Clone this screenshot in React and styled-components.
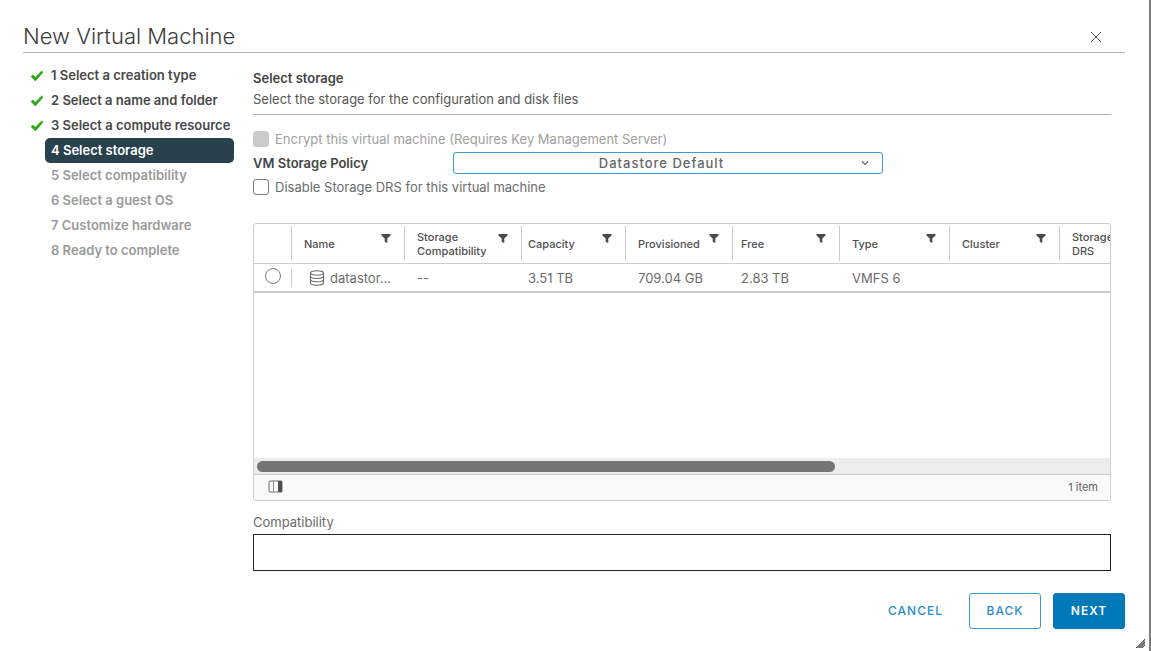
import React, { useState } from "react";
import styled, { createGlobalStyle, css } from "styled-components";

const GlobalStyle = createGlobalStyle`
  *, *::before, *::after { box-sizing: border-box; }
  body {
    margin: 0;
    background: #fff;
    color: #565656;
    font-family: Inter, "Liberation Sans", sans-serif;
    font-size: 13px;
    line-height: 20px;
  }
  button, input, select, textarea { font: inherit; color: inherit; margin: 0; }
`;

const Dialog = styled.main`
  position: relative;
  display: flex;
  flex-direction: column;
  min-height: 100vh;
  padding: 20px 24px 22px 23px;
  border-right: 2px solid #7d7d7d;
`;

const Header = styled.header`
  display: flex;
  align-items: center;
  justify-content: space-between;
  height: 33px;
  padding-right: 22px;
  border-bottom: 1px solid #b3b3b3;
`;

const Title = styled.h1`
  margin: 0;
  font-size: 22px;
  font-weight: 300;
  line-height: 32px;
  color: #3c3c3c;
`;

const CloseButton = styled.button`
  display: flex;
  padding: 4px 2px 2px;
  border: 0;
  background: none;
  cursor: pointer;
`;

const Columns = styled.div`
  display: flex;
  gap: 19px;
  padding-right: 14px;
`;

const Steps = styled.ol`
  flex: 0 0 211px;
  margin: 10px 0 0;
  padding: 0 0 0 7px;
  list-style: none;
`;

const Step = styled.li`
  display: flex;
  align-items: center;
  height: 25px;
  white-space: nowrap;
`;

const StepMark = styled.span`
  display: flex;
  flex: 0 0 15px;
`;

const StepLabel = styled.span`
  flex: 1;
  padding-left: 6px;
  border-radius: 5px;
  line-height: 25px;
  font-size: 13px;
  font-weight: 600;
  color: ${(p) => (p.$state === "todo" ? "#9a9a9a" : "#484848")};
  ${(p) =>
    p.$state === "current" &&
    css`
      background: #29404d;
      color: #fff;
    `}
`;

const Content = styled.section`
  flex: 1;
  min-width: 0;
  padding-top: 15px;
`;

const Intro = styled.div`
  padding-bottom: 4px;
  border-bottom: 1px solid #b3b3b3;
`;

const SectionTitle = styled.h2`
  margin: 0;
  font-size: 13px;
  font-weight: 600;
  line-height: 20px;
  color: #454545;
`;

const Description = styled.p`
  margin: 0;
  line-height: 22px;
  color: #565656;
`;

const Options = styled.div`
  padding: 12px 0 24px;
`;

const OptionRow = styled.div`
  display: flex;
  align-items: center;
  height: 24px;
`;

const CheckLabel = styled.label`
  display: flex;
  align-items: center;
  gap: 6px;
  color: ${(p) => (p.$disabled ? "#a0a0a0" : "#6b6b6b")};
`;

const Checkbox = styled.input`
  appearance: none;
  width: 16px;
  height: 16px;
  border: 1px solid #7a7a7a;
  border-radius: 3px;
  background: #fff;
  &:disabled {
    border-color: #cbcbcb;
    background: #cbcbcb;
  }
  &:checked { background: #0079b8; }
`;

const FieldLabel = styled.label`
  flex: 0 0 200px;
  font-weight: 600;
  color: #454545;
`;

const SelectWrap = styled.div`
  position: relative;
  flex: 0 1 430px;
  display: flex;
  svg {
    position: absolute;
    right: 14px;
    top: 7px;
    pointer-events: none;
  }
`;

const Select = styled.select`
  appearance: none;
  width: 100%;
  height: 22px;
  padding: 0 13px 0 0;
  border: 1px solid #3a9bd0;
  border-radius: 3px;
  background: #fff;
  color: #666;
  font-size: 13px;
  font-weight: 500;
  letter-spacing: 1px;
  line-height: 20px;
  text-align: center;
  text-align-last: center;
`;

const Grid = styled.div`
  border: 1px solid #ccc;
  border-radius: 3px;
  overflow: hidden;
`;

const GridScroll = styled.div`
  min-height: 234px;
  overflow: hidden;
`;

const Table = styled.table`
  table-layout: fixed;
  width: 100%;
  min-width: 871px;
  border-collapse: separate;
  border-spacing: 0;
  th, td {
    padding: 0;
    text-align: left;
  }
  th {
    height: 40px;
    border-bottom: 1px solid #ccc;
  }
  td {
    height: 29px;
    border-bottom: 2px solid #ccc;
  }
`;

const HeadCell = styled.div`
  display: flex;
  align-items: center;
  justify-content: space-between;
  height: 35px;
  padding: 0 13px 0 ${(p) => p.$inset}px;
  border-left: 1px solid #ccc;
  font-size: 11px;
  font-weight: 500;
  line-height: 14px;
  color: #505050;
`;

const FilterButton = styled.button`
  display: flex;
  align-self: flex-start;
  margin-top: 8px;
  padding: 0;
  border: 0;
  background: none;
  cursor: pointer;
`;

const Cell = styled.div`
  display: flex;
  align-items: center;
  gap: 5px;
  height: 18px;
  padding-left: ${(p) => p.$inset}px;
  border-left: 1px solid ${(p) => (p.$divided ? "#ccc" : "transparent")};
  white-space: nowrap;
  color: #6b6b6b;
`;

const Radio = styled.input`
  appearance: none;
  display: block;
  width: 16px;
  height: 16px;
  border: 1px solid #7a7a7a;
  border-radius: 50%;
  &:checked { background: #0079b8; }
`;

const RadioCell = styled.div`
  display: flex;
  justify-content: center;
  height: 20px;
`;

const ScrollTrack = styled.div`
  height: 16px;
  padding: 3px;
  background: #ededed;
`;

const ScrollThumb = styled.div`
  width: 68%;
  height: 11px;
  border-radius: 6px;
  background: #757575;
`;

const GridFooter = styled.footer`
  display: flex;
  align-items: center;
  justify-content: space-between;
  height: 26px;
  padding: 0 12px 2px 14px;
  border-top: 1px solid #ccc;
  background: #fafafa;
  font-size: 11px;
  color: #606060;
`;

const IconButton = styled.button`
  display: flex;
  padding: 0;
  border: 0;
  background: none;
  cursor: pointer;
`;

const CompatLabel = styled.label`
  display: block;
  margin-top: 11px;
  line-height: 20px;
  color: #6b6b6b;
`;

const CompatBox = styled.textarea`
  display: block;
  width: 100%;
  height: 37px;
  margin-top: 2px;
  border: 1px solid #222;
  border-radius: 0;
  resize: none;
`;

const Actions = styled.footer`
  display: flex;
  justify-content: flex-end;
  gap: 12px;
  margin-top: 22px;
`;

const variants = {
  link: css`
    border-color: transparent;
    background: none;
    color: #2a8cc7;
  `,
  outline: css`
    border-color: #3a9bd0;
    background: #fff;
    color: #2a8cc7;
  `,
  primary: css`
    border-color: #0079b8;
    background: #0079b8;
    color: #fff;
    font-weight: 600;
  `,
};

const ActionButton = styled.button`
  min-width: 72px;
  height: 36px;
  padding: 0 13px;
  border: 1px solid;
  border-radius: 3px;
  font-size: 12px;
  font-weight: 500;
  letter-spacing: 1px;
  cursor: pointer;
  ${(p) => variants[p.$variant]}
`;

const ResizeGrip = styled.svg`
  position: absolute;
  right: 4px;
  bottom: 3px;
`;

const steps = [
  ["1 Select a creation type", "done"],
  ["2 Select a name and folder", "done"],
  ["3 Select a compute resource", "done"],
  ["4 Select storage", "current"],
  ["5 Select compatibility", "todo"],
  ["6 Select a guest OS", "todo"],
  ["7 Customize hardware", "todo"],
  ["8 Ready to complete", "todo"],
];

const columns = [
  { label: "Name", width: 113, inset: 12, icon: true },
  { label: "Storage Compatibility", width: 117, inset: 12, value: "--" },
  { label: "Capacity", width: 104, inset: 6, value: "3.51 TB" },
  { label: "Provisioned", width: 107, inset: 12, value: "709.04 GB" },
  { label: "Free", width: 107, inset: 8, value: "2.83 TB" },
  { label: "Type", width: 110, inset: 12, value: "VMFS 6" },
  { label: "Cluster", width: 110, inset: 12 },
  { label: "Storage DRS", inset: 12, last: true },
];

const Check = () => (
  <svg width="14" height="12" viewBox="0 0 14 12" aria-hidden="true">
    <path d="M1 6.6 3.2 5l2 2.4L11.6 1 13 2.2 5.4 11Z" fill="#26a80f" stroke="#26a80f" strokeWidth=".6" strokeLinejoin="round" />
  </svg>
);

const Funnel = () => (
  <svg width="10" height="9" viewBox="0 0 10 9" aria-hidden="true">
    <path d="M.5 0h9v1.6L6.3 4.6V9L3.7 7.8V4.6L.5 1.6Z" fill="#4a4a4a" />
  </svg>
);

const Database = () => (
  <svg width="16" height="16" viewBox="0 0 16 16" fill="none" stroke="#6b6b6b" strokeWidth="1.1" aria-hidden="true">
    <ellipse cx="8" cy="3" rx="6.5" ry="2.2" />
    <path d="M1.5 3v10c0 1.2 2.9 2.2 6.5 2.2s6.5-1 6.5-2.2V3M1.5 6.3c0 1.2 2.9 2.2 6.5 2.2s6.5-1 6.5-2.2M1.5 9.6c0 1.2 2.9 2.2 6.5 2.2s6.5-1 6.5-2.2" />
  </svg>
);

export default function App() {
  const [noDrs, setNoDrs] = useState(false);
  return (
    <>
      <GlobalStyle />
      <Dialog>
        <Header>
          <Title>New Virtual Machine</Title>
          <CloseButton aria-label="Close">
            <svg width="10" height="10" viewBox="0 0 10 10" stroke="#5a5a5a" aria-hidden="true">
              <path d="M0 0 10 10M10 0 0 10" />
            </svg>
          </CloseButton>
        </Header>
        <Columns>
          <Steps>
            {steps.map(([label, state]) => (
              <Step key={label}>
                <StepMark>{state === "done" && <Check />}</StepMark>
                <StepLabel $state={state}>{label}</StepLabel>
              </Step>
            ))}
          </Steps>
          <Content>
            <Intro>
              <SectionTitle>Select storage</SectionTitle>
              <Description>Select the storage for the configuration and disk files</Description>
            </Intro>
            <Options>
              <OptionRow>
                <CheckLabel $disabled>
                  <Checkbox type="checkbox" disabled />
                  Encrypt this virtual machine (Requires Key Management Server)
                </CheckLabel>
              </OptionRow>
              <OptionRow>
                <FieldLabel htmlFor="policy">VM Storage Policy</FieldLabel>
                <SelectWrap>
                  <Select id="policy">
                    <option>Datastore Default</option>
                  </Select>
                  <svg width="8" height="8" viewBox="0 0 8 8" fill="none" stroke="#666" strokeWidth="1.2" aria-hidden="true">
                    <path d="M1 2.5 4 5.5 7 2.5" />
                  </svg>
                </SelectWrap>
              </OptionRow>
              <OptionRow>
                <CheckLabel>
                  <Checkbox type="checkbox" checked={noDrs} onChange={(e) => setNoDrs(e.target.checked)} />
                  Disable Storage DRS for this virtual machine
                </CheckLabel>
              </OptionRow>
            </Options>
            <Grid>
              <GridScroll>
                <Table>
                  <colgroup>
                    <col width="37" />
                    {columns.map((c) => (
                      <col key={c.label} width={c.width} />
                    ))}
                  </colgroup>
                  <thead>
                    <tr>
                      <th aria-label="Selection" />
                      {columns.map((c) => (
                        <th key={c.label} scope="col">
                          <HeadCell $inset={c.inset}>
                            {c.label}
                            {!c.last && (
                              <FilterButton aria-label={`Filter ${c.label}`}>
                                <Funnel />
                              </FilterButton>
                            )}
                          </HeadCell>
                        </th>
                      ))}
                    </tr>
                  </thead>
                  <tbody>
                    <tr>
                      <td>
                        <RadioCell>
                          <Radio type="radio" name="datastore" aria-label="datastore" />
                        </RadioCell>
                      </td>
                      {columns.map((c) => (
                        <td key={c.label}>
                          <Cell $inset={c.icon ? 17 : c.inset} $divided={c.icon}>
                            {c.icon ? (
                              <>
                                <Database />
                                datastor...
                              </>
                            ) : (
                              c.value
                            )}
                          </Cell>
                        </td>
                      ))}
                    </tr>
                  </tbody>
                </Table>
              </GridScroll>
              <ScrollTrack>
                <ScrollThumb />
              </ScrollTrack>
              <GridFooter>
                <IconButton aria-label="Show columns">
                  <svg width="15" height="13" viewBox="0 0 15 13" aria-hidden="true">
                    <rect x="1" y="1" width="13" height="11" rx="1" fill="#fff" stroke="#6b6b6b" />
                    <path d="M5.5 1v11" stroke="#8a8a8a" />
                    <path d="M10 1h4v11h-4z" fill="#505050" />
                  </svg>
                </IconButton>
                <span>1 item</span>
              </GridFooter>
            </Grid>
            <CompatLabel htmlFor="compat">Compatibility</CompatLabel>
            <CompatBox id="compat" readOnly />
          </Content>
        </Columns>
        <Actions>
          <ActionButton $variant="link">CANCEL</ActionButton>
          <ActionButton $variant="outline">BACK</ActionButton>
          <ActionButton $variant="primary">NEXT</ActionButton>
        </Actions>
        <ResizeGrip width="9" height="9" viewBox="0 0 9 9" aria-hidden="true">
          <path d="M9 0v6.5L6.5 9H0Z" fill="#8a8a8a" />
          <path d="M0 9 9 0M3 9 9 3M6 9 9 6" stroke="#555" />
        </ResizeGrip>
      </Dialog>
    </>
  );
}
